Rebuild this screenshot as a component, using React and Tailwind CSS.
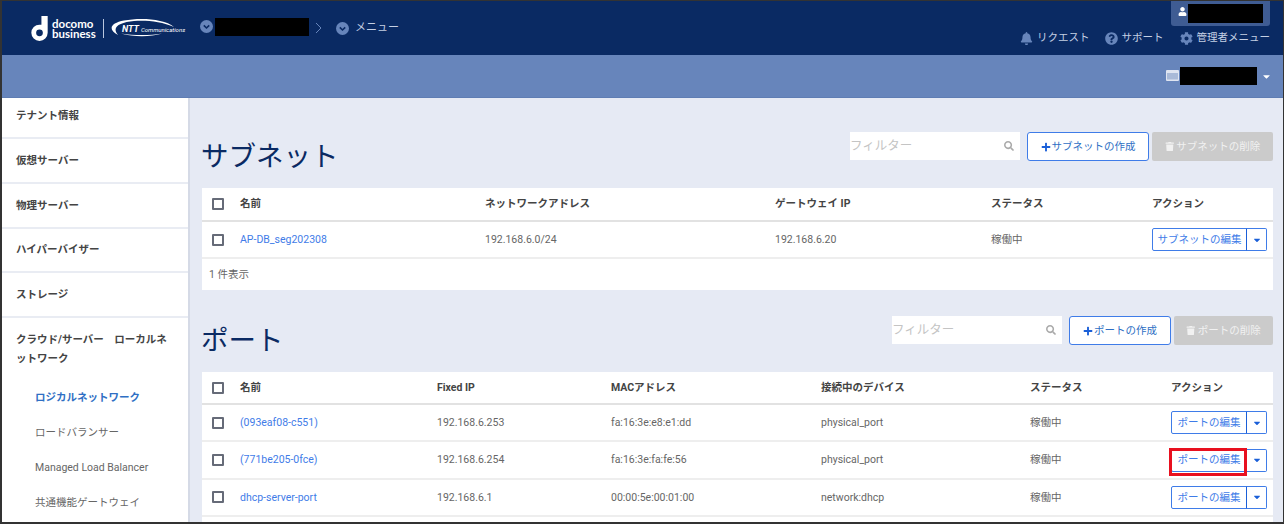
import { FaBell, FaCaretDown, FaCog, FaPlus, FaQuestionCircle, FaSearch, FaTrash, FaUser } from "react-icons/fa";

const FONT = "font-['Roboto','Noto_Sans_CJK_JP',sans-serif]";

function CircleChevron() {
  return (
    <svg width="13" height="13" viewBox="0 0 13 13">
      <circle cx="6.5" cy="6.5" r="6.5" fill="#6785bb" />
      <path d="M3.8 5.4 6.5 8l2.7-2.6" fill="none" stroke="#0a2a63" strokeWidth="1.6" />
    </svg>
  );
}

function Logo() {
  return (
    <div className="flex items-center">
      <svg width="19" height="25" viewBox="3 0 17 26">
        <path d="M13.5 0h6.5v17.5a8.5 8.5 0 1 1-8.5-8.500c.7 0 1.400.1 2 .2zM11.500 14a3.500 3.500 0 1 0 0 7 3.500 3.500 0 0 0 0-7z" fill="#fff" fillRule="evenodd" />
      </svg>
      <div className="ml-[3px] mt-[2px] flex w-[44px] flex-col font-['Lato'] text-[11.5px] font-bold leading-[10px] text-white">
        <span>docomo</span>
        <span>business</span>
      </div>
      <div className="ml-[7px] h-[19px] w-px bg-[#b9c6de]" />
      <div className="relative ml-[6px] flex h-[20px] w-[73px] items-center">
        <svg width="73" height="20" viewBox="0 0 73 20" className="absolute left-0 top-0">
          <path d="M8 17C-3 11 1 5 14 2.500 30-.5 54 .5 64 9 52 3.500 36 2 24 3 10 4.200 1 9 8 17z" fill="#fff" />
          <path d="M11 15.500C24 19 40 19 52 15.500 40 17.500 24 17.500 11 15.500z" fill="#fff" />
        </svg>
        <span className="relative ml-[12px] mt-[3px] flex items-baseline whitespace-nowrap italic leading-none text-white">
          <span className="text-[9px] font-bold">NTT</span>
          <span className="ml-[2px] text-[6px]">Communications</span>
        </span>
      </div>
    </div>
  );
}

function Header() {
  return (
    <div className="flex h-[54px] shrink-0 justify-between bg-[#0a2a63] pl-[28px] pr-[13px]">
      <div className="flex items-center">
        <Logo />
        <div className="ml-[17px] mb-[3px]"><CircleChevron /></div>
        <div className="ml-[2px] mb-[3px] h-[18px] w-[94px] bg-black" />
        <svg width="7" height="12" viewBox="0 0 7 12" className="ml-[6px]">
          <path d="M1 1l5 5-5 5" fill="none" stroke="#6785bb" strokeWidth="1" />
        </svg>
        <div className="ml-[14px]"><CircleChevron /></div>
        <span className="ml-[6px] text-[11px] text-[#c5d0e4]">メニュー</span>
      </div>
      <div className="flex flex-col items-end">
        <div className="flex h-[25px] w-[99px] items-center rounded-b-[3px] bg-[#3f5c93] pl-[7px]">
          <FaUser className="mb-[4px] h-[9px] w-[9px] text-white" />
          <div className="ml-px h-[19px] w-[75px] bg-black" />
        </div>
        <div className="mt-[5px] flex items-center text-[10.5px] leading-[14px] text-[#c5d0e4]">
          <FaBell className="h-[13px] w-[13px] text-[#6785bb]" />
          <span className="ml-[4px]">リクエスト</span>
          <FaQuestionCircle className="ml-[15px] h-[13px] w-[13px] text-[#6785bb]" />
          <span className="ml-[4px]">サポート</span>
          <FaCog className="ml-[16px] h-[13px] w-[13px] text-[#6785bb]" />
          <span className="ml-[4px]">管理者メニュー</span>
        </div>
      </div>
    </div>
  );
}

function SubBar() {
  return (
    <div className="flex h-[43px] shrink-0 items-center justify-end border-b border-[#5f7db3] bg-[#6785bb] pr-[11px]">
      <svg width="13" height="11" viewBox="0 0 13 11" className="mb-[1px]">
        <rect width="13" height="11" rx="1" fill="#dfe5f1" />
        <rect x="1" y="3" width="11" height="6.500" fill="#a9bad8" />
      </svg>
      <div className="ml-[1px] h-[18px] w-[77px] bg-black" />
      <FaCaretDown className="ml-[4px] text-[11px] text-white" />
    </div>
  );
}

function Sidebar() {
  const row = "flex items-center border-b-2 border-[#e9ecf3] px-[14px] text-[10.5px] font-bold text-[#444]";
  return (
    <div className="flex w-[188px] shrink-0 flex-col border-r-2 border-[#d5dae6] bg-white">
      <div className={`${row} h-[41px] pb-[3px]`}>テナント情報</div>
      <div className={`${row} h-[45px]`}>仮想サーバー</div>
      <div className={`${row} h-[45px]`}>物理サーバー</div>
      <div className={`${row} h-[44px]`}>ハイパーバイザー</div>
      <div className={`${row} h-[45px]`}>ストレージ</div>
      <div className="px-[14px] pt-[12px] text-[10.5px] font-bold leading-[19px] text-[#444]">
        クラウド/サーバー　ローカルネットワーク
      </div>
      <div className="flex flex-col pl-[33px] pt-[12px] text-[10.5px] text-[#666]">
        <div className="flex h-[35px] items-center font-bold text-[#2f6fc4]">ロジカルネットワーク</div>
        <div className="flex h-[35px] items-center">ロードバランサー</div>
        <div className="flex h-[35px] items-center">Managed Load Balancer</div>
        <div className="flex h-[35px] items-center">共通機能ゲートウェイ</div>
      </div>
    </div>
  );
}

function Checkbox() {
  return <div className="h-[12px] w-[12px] rounded-[1px] border-2 border-[#666b78] bg-white" />;
}

function SectionHead({ title, filterW, createW, deleteW, name }) {
  return (
    <div className="flex h-[56px] justify-between">
      <h1 className="ml-[-1px] mt-[5px] h-[40px] text-[27.5px] leading-[40px] text-[#0a2a63]">{title}</h1>
      <div className="flex h-[29px] items-start">
        <div className={`flex h-[28px] items-center justify-between bg-white pr-[6px] text-[12.5px] text-[#c4c4c4] ${filterW}`}>
          <span>フィルター</span>
          <FaSearch className="text-[10px] text-[#aaa]" />
        </div>
        <div className={`ml-[7px] flex h-[29px] items-center justify-center rounded-[3px] border border-[#3f7ce8] bg-white text-[10.5px] text-[#2f6fc4] ${createW}`}>
          <FaPlus className="mr-[1px] text-[10px] text-[#1a5fd8]" />
          {name}の作成
        </div>
        <div className={`ml-[3px] flex h-[29px] items-center justify-center rounded-[2px] bg-[#cbcbcb] text-[10.5px] text-[#f1f1f1] ${deleteW}`}>
          <FaTrash className="mr-[2px] text-[9.5px]" />
          {name}の削除
        </div>
      </div>
    </div>
  );
}

function EditButton({ label, width, highlight }) {
  return (
    <div className="relative flex h-[23px]">
      <div className={`flex items-center justify-center rounded-l-[2px] border border-[#3f7ce8] text-[10.5px] text-[#3f7ce8] ${width}`}>
        {label}
      </div>
      <div className="ml-[-1px] flex w-[21px] items-center justify-center rounded-r-[2px] border border-[#3f7ce8] border-l-[#1a5fd8]">
        <FaCaretDown className="text-[10px] text-[#1a5fd8]" />
      </div>
      {highlight && <div className="absolute left-[-2px] top-[-1px] h-[28px] w-[78px] border-[3px] border-[#e8101f]" />}
    </div>
  );
}

function TableRow({ cols, head, values, h, border }) {
  return (
    <div className={`flex items-center ${h} ${border}`}>
      <div className="flex w-[38px] shrink-0 pl-[10px]"><Checkbox /></div>
      {values.map((v, i) => (
        <div key={i} className={`shrink-0 ${cols[i]} ${head ? "font-bold text-[#444]" : i === 0 ? "text-[#3f7ce8]" : "text-[#666]"}`}>
          {v}
        </div>
      ))}
    </div>
  );
}

const subnetCols = ["w-[245px]", "w-[290px]", "w-[216px]", "w-[161px]", "w-[120px]"];
const portCols = ["w-[197px]", "w-[174px]", "w-[210px]", "w-[209px]", "w-[141px]", "w-[96px]"];

const ports = [
  ["(093eaf08-c551)", "192.168.6.253", "fa:16:3e:e8:e1:dd", "physical_port"],
  ["(771be205-0fce)", "192.168.6.254", "fa:16:3e:fa:fe:56", "physical_port"],
  ["dhcp-server-port", "192.168.6.1", "00:00:5e:00:01:00", "network:dhcp"],
];

function Main() {
  return (
    <div className="flex-1 bg-[#e6eaf4] pl-[12px] pr-[10px] pt-[34px] text-[10.5px]">
      <SectionHead title="サブネット" name="サブネット" filterW="w-[170px]" createW="w-[122px]" deleteW="w-[121px]" />
      <div className="bg-white">
        <TableRow cols={subnetCols} head h="h-[34px]" border="border-b-[2px] border-[#e2e2e2]" values={["名前", "ネットワークアドレス", "ゲートウェイ IP", "ステータス", "アクション"]} />
        <TableRow
          cols={subnetCols}
          h="h-[37px]"
          border="border-b-[2px] border-[#eeeeee]"
          values={["AP-DB_seg202308", "192.168.6.0/24", "192.168.6.20", "稼働中", <EditButton label="サブネットの編集" width="w-[95px]" />]}
        />
        <div className="flex h-[31px] items-center pl-[7px] text-[#666]">1 件表示</div>
      </div>
      <div className="mt-[26px]">
        <SectionHead title="ポート" name="ポート" filterW="w-[170px]" createW="w-[102px]" deleteW="w-[99px]" />
      </div>
      <div className="bg-white pb-[7px]">
        <TableRow cols={portCols} head h="h-[33px]" border="border-b-[2px] border-[#e2e2e2]" values={["名前", "Fixed IP", "MACアドレス", "接続中のデバイス", "ステータス", "アクション"]} />
        {ports.map((p, i) => (
          <TableRow
            key={p[0]}
            cols={portCols}
            h="h-[37.4px]"
            border="border-b-[2px] border-[#eeeeee]"
            values={[...p, "稼働中", <EditButton label="ポートの編集" width="w-[76px]" highlight={i === 1} />]}
          />
        ))}
      </div>
    </div>
  );
}

export default function App() {
  return (
    <div className={`flex h-[524px] w-[1284px] flex-col overflow-hidden border-b-2 border-l-2 border-r border-t border-[#333] ${FONT}`}>
      <Header />
      <SubBar />
      <div className="flex min-h-0 flex-1">
        <Sidebar />
        <Main />
      </div>
    </div>
  );
}
